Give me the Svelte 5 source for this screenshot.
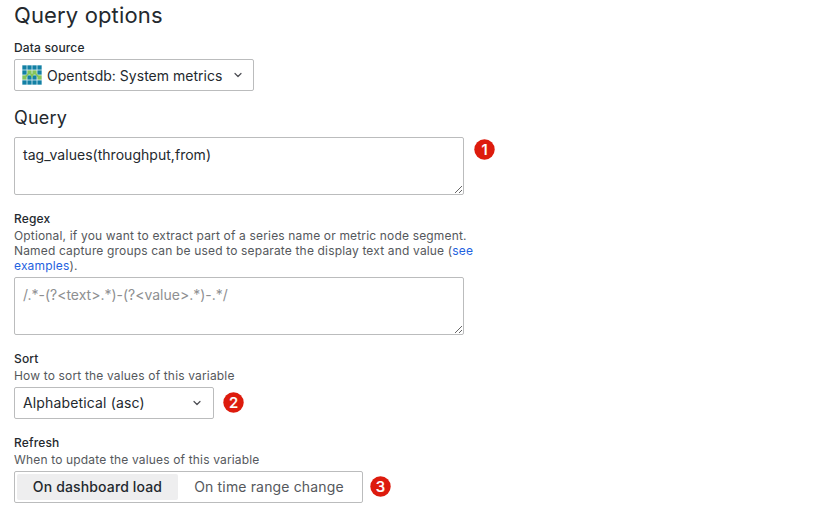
<script>
  // b: blue, g: green thread of the logo
  const weave = ['bbbb', 'bggb', 'gbbg', 'bbbb'];
  const colors = { b: '#1380a4', g: '#85c45a' };
  let query = $state('tag_values(throughput,from)');
</script>

{#snippet badge(n)}
  <svg class="badge" width="21" height="21" viewBox="0 0 21 21">
    <circle cx="10.5" cy="10.5" r="10.2" fill="#dd1b0d" />
    <text x="10.5" y="15.9" text-anchor="middle">{n}</text>
  </svg>
{/snippet}

{#snippet chevron()}
  <svg class="chev" width="8" height="6" viewBox="0 0 8 6"><path d="M1 1.5 4 4.5 7 1.5" fill="none" stroke="#4c4d53" stroke-width="1.2" stroke-linecap="round" stroke-linejoin="round" /></svg>
{/snippet}

<main>
  <h2>Query options</h2>
  <label class="name ds-label" for="ds">Data source</label>
  <button class="select ds" id="ds">
    <svg width="20" height="20" viewBox="0 0 20 20">
      <rect width="20" height="20" fill="#d9ecf2" />
      {#each weave as row, y}
        {#each row as c, x}
          <rect x={x * 5 + 0.4} y={y * 5 + 0.4} width="4.2" height="4.2" fill={colors[c]} />
        {/each}
      {/each}
      <path d="M4 11.5 6 9M9 9 10 11 11 9M14 9 16 11.5" fill="none" stroke="#85c45a" stroke-width="2" />
    </svg>
    <span>Opentsdb: System metrics</span>
    {@render chevron()}
  </button>
  <h3>Query</h3>
  <div class="row"><textarea bind:value={query} spellcheck="false"></textarea>{@render badge(1)}</div>
  <div class="name regex">Regex</div>
  <p class="long">Optional, if you want to extract part of a series name or metric node segment.<br />Named capture groups can be used to separate the display text and value (<a href="#see">see<br />examples</a>).</p>
  <textarea placeholder={'/.*-(?<text>.*)-(?<value>.*)-.*/'}></textarea>
  <div class="name sort">Sort</div>
  <p>How to sort the values of this variable</p>
  <div class="row second"><button class="select order"><span>Alphabetical (asc)</span>{@render chevron()}</button>{@render badge(2)}</div>
  <div class="name refresh">Refresh</div>
  <p>When to update the values of this variable</p>
  <div class="row third"><div class="radio"><button class="on">On dashboard load</button><button>On time range change</button></div>{@render badge(3)}</div>
</main>

<style>
  :global(body) { background: #fff; }
  main { box-sizing: border-box; height: 515px; padding: 0 14px; overflow: hidden; font: 14px/22px Inter, sans-serif; color: #24292e; letter-spacing: 0.15px; }
  h2, h3, p { margin: 0; font-weight: 400; }
  h2 { font-size: 22px; line-height: 30px; height: 40px; letter-spacing: 0.14px; }
  h3 { font-size: 18px; line-height: 22px; margin: 16px 0 8px; letter-spacing: 0.2px; }
  .name { display: block; font-size: 12px; line-height: 15px; font-weight: 500; }
  .ds-label { margin-bottom: 4px; }
  p { font-size: 12px; line-height: 15px; color: #55585c; margin: 2px 0 4px; letter-spacing: 0.163px; }
  a { color: #1f62e0; text-decoration: none; }
  button { font: inherit; letter-spacing: inherit; color: inherit; background: none; border: 0; }
  .select { box-sizing: border-box; height: 32px; display: flex; align-items: center; padding: 0 8px; border: 1px solid #bbbcbd; border-radius: 2px; background: #fff; }
  .ds { width: 240px; gap: 5px; padding-left: 7px; letter-spacing: 0.02px; }
  .ds span { padding-top: 2px; }
  .select .chev { margin-left: auto; margin-right: 3px; }
  .order { width: 200px; }
  .order .chev { margin-right: 4px; }
  .row { display: flex; align-items: flex-start; }
  textarea { box-sizing: border-box; display: block; width: 450px; height: 58px; padding: 6px 8px; border: 1px solid #bbbcbd; border-radius: 2px; font: inherit; letter-spacing: 0.03px; color: inherit; outline: 0; }
  textarea::placeholder { color: #8e8f91; opacity: 1; letter-spacing: -0.01px; }
  .badge { margin: 2px 0 0 10px; }
  .second .badge { margin: 5px 0 0 9px; }
  .third .badge { margin: 5px 0 0 7px; }
  .badge text { font: 500 15px Inter, sans-serif; fill: #fff; stroke: #fff; stroke-width: 0.2px; letter-spacing: 0; }
  .regex, .sort, .refresh { margin-top: 16px; }
  .radio { box-sizing: border-box; display: flex; width: 349px; height: 32px; padding: 2px; border: 1px solid #bbbcbd; border-radius: 2px; }
  .radio button { width: 161px; padding: 0; color: #55585c; white-space: nowrap; }
  .radio button + button { width: 182px; }
  .radio .on { background: #eeeeef; color: #24292e; font-weight: 500; border-radius: 2px; letter-spacing: 0.14px; }
</style>
